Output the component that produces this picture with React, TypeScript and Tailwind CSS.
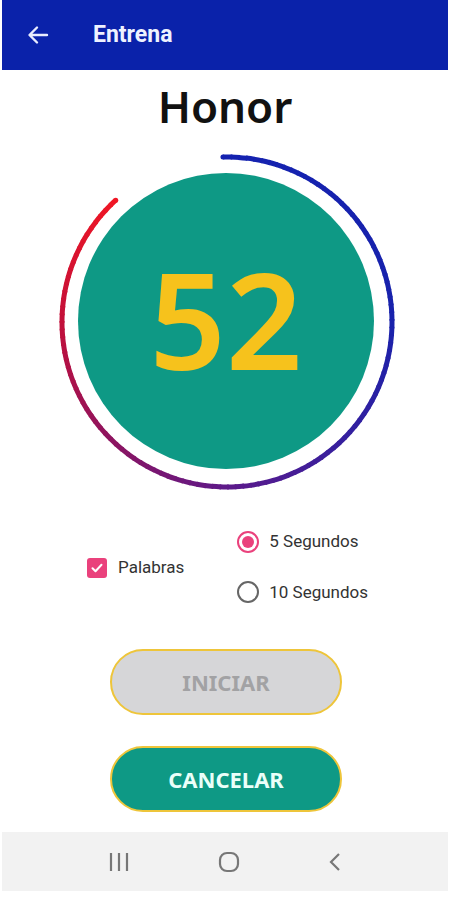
import React from "react";

const CX = 170;
const CY = 170;
const R = 165;
const A0 = -91.4;
const SWEEP = 319;

const stops: [number, [number, number, number]][] = [
  [0, [0x14, 0x22, 0xb0]],
  [0.28, [0x18, 0x22, 0xac]],
  [0.45, [0x3a, 0x1f, 0x9c]],
  [0.56, [0x5a, 0x1a, 0x8c]],
  [0.7, [0x8a, 0x14, 0x62]],
  [0.85, [0xc2, 0x10, 0x3a]],
  [1, [0xf0, 0x16, 0x24]],
];

function colorAt(t: number) {
  for (let i = 0; i < stops.length - 1; i++) {
    const [t0, c0] = stops[i];
    const [t1, c1] = stops[i + 1];
    if (t >= t0 && t <= t1) {
      const f = (t - t0) / (t1 - t0);
      const c = c0.map((v, k) => Math.round(v + (c1[k] - v) * f));
      return `rgb(${c[0]},${c[1]},${c[2]})`;
    }
  }
  const c = stops[stops.length - 1][1];
  return `rgb(${c[0]},${c[1]},${c[2]})`;
}

function pt(deg: number) {
  const a = (deg * Math.PI) / 180;
  return [CX + R * Math.cos(a), CY + R * Math.sin(a)];
}

function Ring() {
  const N = 120;
  const segs = [];
  for (let i = 0; i < N; i++) {
    const a1 = A0 + (SWEEP * i) / N;
    const a2 = A0 + (SWEEP * (i + 1)) / N + (i < N - 1 ? 0.6 : 0);
    const [x1, y1] = pt(a1);
    const [x2, y2] = pt(a2);
    segs.push(
      <path
        key={i}
        d={`M ${x1} ${y1} A ${R} ${R} 0 0 1 ${x2} ${y2}`}
        fill="none"
        stroke={colorAt((i + 0.5) / N)}
        strokeWidth={5}
        strokeLinecap="butt"
      />
    );
  }
  const [sx, sy] = pt(A0);
  const [ex, ey] = pt(A0 + SWEEP);
  return (
    <svg width={340} height={340} viewBox="0 0 340 340" className="absolute left-0 top-0">
      {segs}
      <circle cx={sx} cy={sy} r={2.5} fill={colorAt(0)} />
      <circle cx={ex} cy={ey} r={2.5} fill={colorAt(1)} />
    </svg>
  );
}

export default function App() {
  return (
    <div className="w-[450px] h-[900px] bg-white flex flex-col" style={{ fontFamily: "Roboto, 'Noto Sans', sans-serif" }}>
      {/* Header */}
      <div className="mx-[2px] h-[70px] bg-[#0a22aa] flex items-center shrink-0">
        <svg width="22" height="20" viewBox="0 0 22 20" className="ml-[25px]">
          <path d="M20 10H3M10 2.5L2.5 10l7.5 7.5" fill="none" stroke="#e8ecff" strokeWidth="2.4" strokeLinecap="round" strokeLinejoin="round" />
        </svg>
        <span className="ml-[44px] text-[23px] font-bold text-[#eef2ff] font-['Roboto']">Entrena</span>
      </div>

      {/* Title */}
      <div className="mt-[8px] text-center text-[44px] leading-[56px] font-semibold text-[#111] font-['Noto_Sans']">
        Honor
      </div>

      {/* Ring */}
      <div className="relative w-[340px] h-[340px] ml-[57px] mt-[18px] shrink-0">
        <div className="absolute left-[21px] top-[21px] w-[296px] h-[296px] rounded-full bg-[#0e9985] flex items-center justify-center">
          <span className="text-[134px] leading-none font-semibold text-[#f6c21c] font-['Noto_Sans'] -mt-[6px]">52</span>
        </div>
        <Ring />
      </div>

      {/* Options */}
      <div className="flex items-center mt-[30px] h-[94px]">
        <div className="flex items-center ml-[87px] -mt-[2px]">
          <div className="w-[20px] h-[20px] rounded-[3px] bg-[#ea417c] flex items-center justify-center">
            <svg width="14" height="14" viewBox="0 0 14 14">
              <path d="M2.5 7.2l3 3 6-6.4" fill="none" stroke="white" strokeWidth="2" strokeLinecap="round" strokeLinejoin="round" />
            </svg>
          </div>
          <span className="ml-[11px] text-[17px] text-[#333]">Palabras</span>
        </div>
        <div className="flex flex-col ml-[53px] gap-[25px] -mt-[4px]">
          <div className="flex items-center">
            <div className="w-[22px] h-[22px] rounded-full border-2 border-[#ea417c] flex items-center justify-center">
              <div className="w-[12px] h-[12px] rounded-full bg-[#ea417c]" />
            </div>
            <span className="ml-[10px] text-[17px] text-[#333]">5 Segundos</span>
          </div>
          <div className="flex items-center">
            <div className="w-[22px] h-[22px] rounded-full border-2 border-[#666]" />
            <span className="ml-[10px] text-[17px] text-[#333]">10 Segundos</span>
          </div>
        </div>
      </div>

      {/* Buttons */}
      <div className="flex flex-col items-center mt-[33px] gap-[31px] pl-[2px]">
        <div className="w-[232px] h-[66px] rounded-full bg-[#d6d6d8] border-2 border-[#eec53a] flex items-center justify-center">
          <span className="text-[22px] font-bold text-[#a2a2a4] font-['Noto_Sans']">INICIAR</span>
        </div>
        <div className="w-[232px] h-[66px] rounded-full bg-[#0e9985] border-2 border-[#eec53a] flex items-center justify-center">
          <span className="text-[22px] font-bold text-[#eafff9] font-['Noto_Sans']">CANCELAR</span>
        </div>
      </div>

      {/* Nav bar */}
      <div className="mt-auto mb-[9px] mx-[2px] h-[59px] bg-[#f2f2f2] flex items-center shrink-0">
        <div className="flex items-center justify-around w-full px-[62px]">
          <svg width="22" height="20" viewBox="0 0 22 20">
            <path d="M3 1v18M11 1v18M19 1v18" stroke="#777" strokeWidth="2.2" />
          </svg>
          <svg width="22" height="22" viewBox="0 0 22 22">
            <rect x="2" y="2" width="18" height="18" rx="7" fill="none" stroke="#777" strokeWidth="2.2" />
          </svg>
          <svg width="14" height="20" viewBox="0 0 14 20">
            <path d="M11 2L3 10l8 8" fill="none" stroke="#777" strokeWidth="2.2" />
          </svg>
        </div>
      </div>
    </div>
  );
}
